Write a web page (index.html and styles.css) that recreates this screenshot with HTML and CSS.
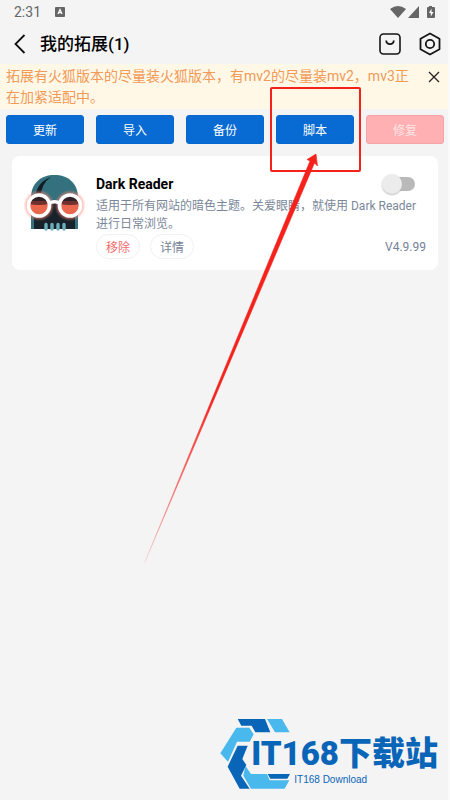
FILE: index.html
```html
<!DOCTYPE html>
<html lang="zh-CN">
<head>
<meta charset="utf-8">
<meta name="viewport" content="width=device-width, initial-scale=1">
<title>我的拓展</title>
<link rel="stylesheet" href="styles.css">
</head>
<body>
<div class="screen">
  <div class="status">
    <span class="time">2:31</span>
    <svg class="badge" viewBox="0 0 10 10" width="10" height="10"><rect width="10" height="10" rx="1" fill="#666"/><path d="M3 7 5 2.5 7 7M3.6 5.6h2.8" fill="none" stroke="#fff" stroke-width="1.2"/></svg>
    <svg class="signals" viewBox="0 0 46 14" width="46" height="14" fill="#666">
      <path d="M0 4Q8-2 16 4L8 13Z"/>
      <path d="M29 1V13H18Z"/>
      <path d="M39 1h3v1h2q1 0 1 1v9q0 1-1 1h-6q-1 0-1-1V3q0-1 1-1h1z"/>
      <path d="M41.500 3.500 39 8h1.800v3.500L43.500 7h-2z" fill="#fff"/>
    </svg>
  </div>
  <header class="header">
    <button class="icon-button" aria-label="返回"><svg viewBox="0 0 12 20" width="12" height="20"><path d="M10.500 1 1.500 10l9 9" fill="none" stroke="#111" stroke-width="1.800"/></svg></button>
    <h1>我的拓展(1)</h1>
    <button class="icon-button" aria-label="商店"><svg viewBox="0 0 22 22" width="22" height="22" fill="none" stroke="#151515" stroke-width="1.600"><rect x="1" y="1" width="20" height="20" rx="3.500"/><path d="M7.200 7.500C7.500 12.300 14.500 12.300 14.800 7.500" stroke-width="1.800"/></svg></button>
    <button class="icon-button" aria-label="设置"><svg viewBox="0 0 22 24" width="22" height="24" fill="none" stroke="#151515" stroke-width="1.800" stroke-linejoin="round"><path d="M11 1.500 20.500 6.700V17.300L11 22.500 1.500 17.300V6.700Z"/><circle cx="11" cy="12" r="4.200"/></svg></button>
  </header>
  <div class="notice">
    <p>拓展有火狐版本的尽量装火狐版本，有mv2的尽量装mv2，mv3正在加紧适配中。</p>
    <button class="icon-button" aria-label="关闭"><svg viewBox="0 0 12 12" width="12" height="12"><path d="M1 1 11 11M11 1 1 11" stroke="#222" stroke-width="1.300"/></svg></button>
  </div>
  <div class="actions">
    <button>更新</button>
    <button>导入</button>
    <button>备份</button>
    <button>脚本</button>
    <button class="repair">修复</button>
  </div>
  <main>
    <article class="card">
      <svg class="logo" viewBox="0 0 64 64" width="64" height="64">
        <defs><clipPath id="head"><path d="M9 59V28C9 13 19 5 32.500 5S56 13 56 28V59Z"/></clipPath>
        <filter id="glow" x="-30%" y="-30%" width="160%" height="160%"><feGaussianBlur stdDeviation="1.300"/></filter></defs>
        <g clip-path="url(#head)">
          <rect width="64" height="64" fill="#34717e"/>
          <path d="M13 32C13 19 18 11 29 7Q19 13 18 30Z" fill="#121c23"/>
          <path d="M12 60V43L20 30H45L53 43V60Z" fill="#18222a"/>
          <path d="M22 27H43L38 32H27Z" fill="#34717e"/>
        </g>
        <g fill="none" stroke="#ff8578" stroke-width="6" opacity=".55" filter="url(#glow)"><circle cx="17" cy="35.500" r="11"/><circle cx="48" cy="35.500" r="11"/></g>
        <circle cx="17" cy="35.500" r="10" fill="#e9674c"/><circle cx="48" cy="35.500" r="10" fill="#e9674c"/>
        <path d="M7 34a10 10 0 0 1 20 0Q17 36 7 34M38 34a10 10 0 0 1 20 0Q48 36 38 34" fill="#70302e"/>
        <path d="M8 31a10 10 0 0 1 18 0ZM39 31a10 10 0 0 1 18 0Z" fill="#302126"/>
        <g fill="none" stroke="#fff" stroke-width="3.600"><circle cx="17" cy="35.500" r="10.500"/><circle cx="48" cy="35.500" r="10.500"/><path d="M27 33.500Q32.500 30 38 33.500"/></g>
        <path d="M24 59V54.500M30 59V54.500M36 59V54.500M42 59V54.500" stroke="#6bafb9" stroke-width="3.400" stroke-linecap="round"/>
      </svg>
      <div class="details">
        <div class="row title-row"><h2>Dark Reader</h2><input class="switch" type="checkbox" aria-label="启用 Dark Reader"></div>
        <p>适用于所有网站的暗色主题。关爱眼睛，就使用 Dark Reader 进行日常浏览。</p>
        <div class="row footer-row">
          <div class="chips"><button class="remove">移除</button><button>详情</button></div>
          <span class="version">V4.9.99</span>
        </div>
      </div>
    </article>
  </main>
  <svg class="annotation" viewBox="0 0 450 800" width="450" height="800" aria-hidden="true">
    <defs><linearGradient id="fade" gradientUnits="userSpaceOnUse" x1="316" y1="154" x2="145" y2="563"><stop offset=".6" stop-color="#f5211b"/><stop offset="1" stop-color="#f5211b" stop-opacity=".1"/></linearGradient></defs>
    <rect x="271" y="88" width="89" height="83" rx="1" fill="none" stroke="#f5211b" stroke-width="2"/>
    <path d="M316 154 307 159.500 310 161 144.500 563 314.500 163 317.500 166Z" fill="url(#fade)" stroke="url(#fade)" stroke-width=".6"/>
  </svg>
  <div class="brand">
    <svg viewBox="0 0 228 234" width="76" height="78">
      <path d="M62 12H144L160 52H115L104 32H73Z" fill="#0965b7"/>
      <path d="M150 12H195L218 52H174Z" fill="#49b8ed"/>
      <path d="M58 38H97L110 58 98 80H60L33 140 10 115Z" fill="#49b8ed"/>
      <path d="M62 92H92L76 132 88 150 72 182 98 221H68L32 155Z" fill="#0965b7"/>
      <path d="M85 152 102 177H150L158 196H217L203 221H102L79 182Z" fill="#49b8ed"/>
      <path d="M152 177H219L211 191H160Z" fill="#0965b7"/>
    </svg>
    <div class="brand-copy"><strong>IT168下载站</strong><span>IT168 Download</span></div>
  </div>
</div>
</body>
</html>
```
FILE: styles.css
```css
* { box-sizing: border-box; }
body {
  margin: 0;
  background: #fff;
  font-family: Roboto, "Noto Sans CJK SC", sans-serif;
}
button { font: inherit; cursor: pointer; }
h1, h2, p { margin: 0; }
svg { display: block; flex: none; }
.screen {
  position: relative;
  min-height: 100vh;
  overflow: hidden;
  background: #f4f4f4;
  border-right: 2px solid #fafafa;
}
.status {
  display: flex;
  align-items: center;
  height: 24px;
  padding: 0 12px 0 14px;
  color: #666;
}
.time { font-size: 14px; }
.badge { margin-left: 14px; }
.signals { margin-left: auto; }
.header {
  display: flex;
  align-items: center;
  gap: 18px;
  height: 40px;
  padding: 0 7px 0 14px;
}
.header h1 {
  flex: 1;
  margin-left: -4px;
  font-size: 17px;
  line-height: 24px;
  font-weight: 500;
}
.icon-button {
  display: grid;
  place-items: center;
  flex: none;
  padding: 0;
  border: 0;
  background: none;
}
.notice {
  display: flex;
  align-items: flex-start;
  justify-content: space-between;
  gap: 14px;
  padding: 2px 8px 1px 6px;
  background: #fff8e7;
  color: #f29a57;
  font-size: 14px;
  line-height: 21px;
}
.notice .icon-button { height: 22px; }
.actions {
  display: grid;
  grid-template-columns: repeat(5, 1fr);
  gap: 12px;
  padding: 6px 4px 12px 6px;
}
.actions button {
  height: 29px;
  padding: 0;
  border: 1px solid #0867ce;
  border-radius: 3px;
  background: #086bd3;
  color: #fff;
  font-size: 12px;
}
.actions .repair {
  border-color: #f6a3a7;
  background: #ffb0b3;
  color: #ffe5e5;
}
main { padding: 0 10px 0 12px; }
.card {
  display: flex;
  gap: 10px;
  padding: 14px 12px 11px 10px;
  border-radius: 8px;
  background: #fff;
}
.details { flex: 1; min-width: 0; }
.row { display: flex; align-items: center; justify-content: space-between; }
.title-row { height: 27px; padding-right: 11px; }
.footer-row { padding-top: 1px; }
.details h2 { font-size: 14px; font-weight: 700; }
.details p {
  color: #7a8799;
  font-size: 12px;
  line-height: 18px;
}
.switch {
  position: relative;
  appearance: none;
  width: 32px;
  height: 14px;
  margin: 0;
  border-radius: 7px;
  background: linear-gradient(90deg, transparent 8px, #b9b9b9 8px);
}
.switch::before {
  content: "";
  position: absolute;
  top: -3px;
  left: -1px;
  width: 20px;
  height: 20px;
  border-radius: 50%;
  background: #ececec;
  box-shadow: 0 1px 2px #bbb;
}
.chips { display: flex; gap: 10px; }
.chips button {
  width: 44px;
  height: 25px;
  padding: 0;
  border: 1px solid #f1f1f1;
  border-radius: 13px;
  background: #fff;
  color: #748196;
  font-size: 12px;
}
.chips .remove { color: #f56c6c; }
.version { color: #748196; font-size: 12px; }
.annotation { position: absolute; top: 0; left: 0; pointer-events: none; }
.brand {
  position: absolute;
  right: 10px;
  bottom: 7px;
  display: flex;
  color: #0965b7;
}
.brand-copy {
  display: flex;
  flex-direction: column;
  margin: 20px 0 0 -42px;
}
.brand strong {
  font-size: 33px;
  line-height: 38px;
  font-weight: 900;
  white-space: nowrap;
}
.brand span {
  padding-left: 43px;
  font-family: "Liberation Sans", sans-serif;
  font-size: 10px;
  line-height: 14px;
}
```
